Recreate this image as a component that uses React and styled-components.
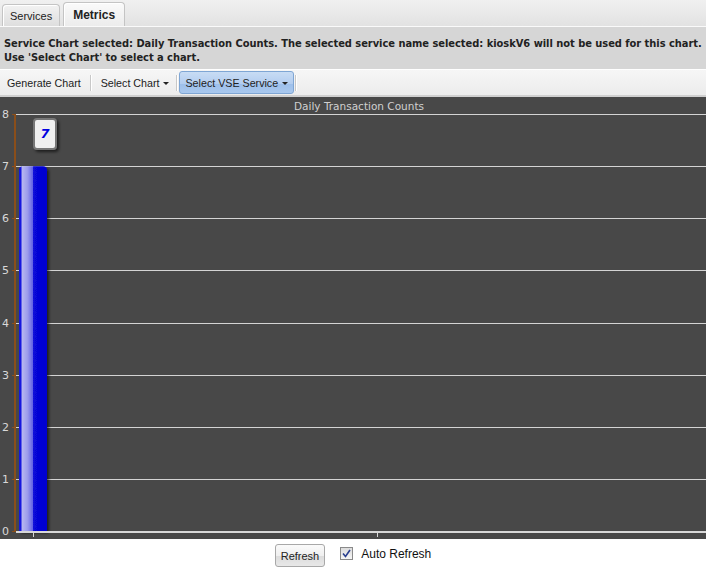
import React from 'react'
import styled, { createGlobalStyle } from 'styled-components'

const GlobalStyle = createGlobalStyle`
  html, body {
    margin: 0;
    padding: 0;
    background: #fff;
  }
  body {
    font-family: "Liberation Sans", Arial, sans-serif;
  }
`

const Page = styled.div`
  width: 706px;
  height: 568px;
  display: flex;
  flex-direction: column;
  overflow: hidden;
`

const TabStrip = styled.div`
  height: 27px;
  display: flex;
  align-items: flex-end;
  gap: 3px;
  padding-left: 2px;
  background: linear-gradient(#f0f0f0, #e2e2e2);
  border-bottom: 1px solid #fafafa;
  box-sizing: border-box;
`

const Tab = styled.div`
  height: ${p => (p.active ? '24px' : '22px')};
  padding: 0 ${p => (p.active ? '9px' : '7px')};
  display: flex;
  align-items: center;
  font-size: ${p => (p.active ? '12px' : '11px')};
  font-weight: ${p => (p.active ? 'bold' : 'normal')};
  color: #222;
  border: 1px solid #c4c4c4;
  border-bottom: none;
  border-radius: 4px 4px 0 0;
  background: ${p => (p.active ? 'linear-gradient(#fafafa, #ececec)' : 'linear-gradient(#f2f2f2, #dedede)')};
  box-shadow: inset 1px 1px 0 #fff;
  box-sizing: border-box;
`

const Message = styled.div`
  background: #d6d6d6;
  padding: 10px 0 3px 4px;
  font-family: "DejaVu Sans Condensed", "DejaVu Sans", sans-serif;
  font-weight: bold;
  font-size: 11px;
  letter-spacing: -0.03px;
  white-space: nowrap;
  line-height: 14px;
  color: #222;
  height: 42px;
  box-sizing: border-box;
`

const Toolbar = styled.div`
  height: 28px;
  display: flex;
  align-items: center;
  padding-left: 1px;
  background: linear-gradient(#f6f6f6, #ececec);
  border-top: 1px solid #fff;
  border-bottom: 2px solid #d0d0d0;
  box-sizing: border-box;
`

const ToolButton = styled.div`
  height: 23px;
  display: flex;
  align-items: center;
  gap: 4px;
  padding: 0 5px;
  font-size: 10.7px;
  color: #222;
  border-radius: 3px;
  box-sizing: border-box;
  border: 1px solid ${p => (p.selected ? '#7fa6d4' : 'transparent')};
  background: ${p => (p.selected ? 'linear-gradient(#c8dcf4 0%, #b3cdef 55%, #9dbfea 56%, #a9c8ee 100%)' : 'transparent')};
`

const Caret = styled.span`
  width: 0;
  height: 0;
  border-left: 3px solid transparent;
  border-right: 3px solid transparent;
  border-top: 3px solid #222;
  margin-top: 1px;
`

const Sep = styled.div`
  width: 1px;
  height: 16px;
  background: #c8c8c8;
  border-right: 1px solid #fff;
  margin: 0 ${p => p.gap || 4}px;
`

const ChartArea = styled.div`
  height: 442px;
  background: #484848;
  flex-shrink: 0;
`

const Footer = styled.div`
  flex: 1;
  display: flex;
  align-items: center;
  justify-content: center;
  gap: 15px;
`

const Button = styled.button`
  height: 23px;
  padding: 0 5px;
  font-family: "Liberation Sans", Arial, sans-serif;
  font-size: 11px;
  color: #222;
  border: 1px solid #a8a8a8;
  border-radius: 3px;
  background: linear-gradient(#fafafa 0%, #f0f0f0 50%, #dcdcdc 51%, #e8e8e8 100%);
  margin-top: 4px;
`

const CheckLabel = styled.label`
  display: flex;
  align-items: center;
  gap: 8px;
  font-size: 12px;
  color: #111;
`

const Box = styled.span`
  width: 11px;
  height: 11px;
  border: 1px solid #8a8a8a;
  background: linear-gradient(#dcdcdc, #f6f6f6);
  display: flex;
  align-items: center;
  justify-content: center;
`

const Chart = () => {
  const top = 17
  const step = 52.125
  const base = top + 8 * step
  const value = 7
  const barTop = base - value * step
  return (
    <svg width="706" height="442" viewBox="0 0 706 442">
      <defs>
        <linearGradient id="bar" x1="0" x2="1" y1="0" y2="0">
          <stop offset="0" stopColor="#1010d8" />
          <stop offset="0.08" stopColor="#1a1ae0" />
          <stop offset="0.1" stopColor="#b8b8f0" />
          <stop offset="0.3" stopColor="#9c9cec" />
          <stop offset="0.5" stopColor="#6060e4" />
          <stop offset="0.52" stopColor="#0808d8" />
          <stop offset="1" stopColor="#0000d0" />
        </linearGradient>
        <filter id="sh" x="-50%" y="-50%" width="200%" height="200%">
          <feGaussianBlur in="SourceAlpha" stdDeviation="1.5" />
          <feOffset dx="2" dy="2" />
          <feComponentTransfer><feFuncA type="linear" slope="0.6" /></feComponentTransfer>
          <feMerge><feMergeNode /><feMergeNode in="SourceGraphic" /></feMerge>
        </filter>
      </defs>
      <text x="359" y="13" textAnchor="middle" fill="#d0d0d0" fontSize="10.5" fontFamily="DejaVu Sans, sans-serif">Daily Transaction Counts</text>
      {Array.from({ length: 8 }, (_, i) => (
        <line key={i} x1="16" x2="706" y1={Math.round(top + i * step) + 0.5} y2={Math.round(top + i * step) + 0.5} stroke="#d4d4d4" strokeWidth="1" />
      ))}
      {Array.from({ length: 9 }, (_, i) => (
        <g key={i}>
          <line x1="12" x2="16" y1={Math.round(top + i * step) + 0.5} y2={Math.round(top + i * step) + 0.5} stroke="#8a4e1a" />
          <text x="2" y={top + i * step + 4} fill="#d8d8d8" fontSize="11" fontFamily="DejaVu Sans, sans-serif">{8 - i}</text>
        </g>
      ))}
      <line x1="15" x2="15" y1={top} y2={base} stroke="#8a4e1a" strokeWidth="2" />
      <g filter="url(#sh)">
        <path d={`M19 ${base} V${barTop + 4} Q19 ${barTop} 23 ${barTop} H43 Q47 ${barTop} 47 ${barTop + 4} V${base} Z`} fill="url(#bar)" />
      </g>
      <line x1="16" x2="706" y1={base + 1} y2={base + 1} stroke="#d8d8d8" strokeWidth="2" />
      <line x1="33.5" x2="33.5" y1={base + 2} y2={base + 6} stroke="#d8d8d8" />
      <line x1="377.5" x2="377.5" y1={base + 2} y2={base + 6} stroke="#d8d8d8" />
      <g filter="url(#sh)">
        <rect x="34" y="22" width="22" height="30" rx="3" fill="#f0f0f0" stroke="#777" strokeWidth="2" />
      </g>
      <text x="45" y="41" textAnchor="middle" fill="#0000e0" fontSize="13" fontWeight="bold" fontStyle="italic" fontFamily="DejaVu Sans, sans-serif">7</text>
    </svg>
  )
}

const App = () => (
  <Page>
    <GlobalStyle />
    <TabStrip>
      <Tab>Services</Tab>
      <Tab active>Metrics</Tab>
    </TabStrip>
    <Message>
      Service Chart selected: Daily Transaction Counts. The selected service name selected: kioskV6 will not be used for this chart.
      <br />
      Use 'Select Chart' to select a chart.
    </Message>
    <Toolbar>
      <ToolButton>Generate Chart</ToolButton>
      <Sep gap={3} />
      <ToolButton>Select Chart <Caret /></ToolButton>
      <Sep gap={1} />
      <ToolButton selected>Select VSE Service <Caret /></ToolButton>
      <Sep gap={1} />
    </Toolbar>
    <ChartArea>
      <Chart />
    </ChartArea>
    <Footer>
      <Button>Refresh</Button>
      <CheckLabel>
        <Box>
          <svg width="9" height="9" viewBox="0 0 9 9">
            <path d="M1 4.5 L3.5 7.5 L8 1" fill="none" stroke="#2a3f8f" strokeWidth="1.6" />
          </svg>
        </Box>
        Auto Refresh
      </CheckLabel>
    </Footer>
  </Page>
)

export default App
